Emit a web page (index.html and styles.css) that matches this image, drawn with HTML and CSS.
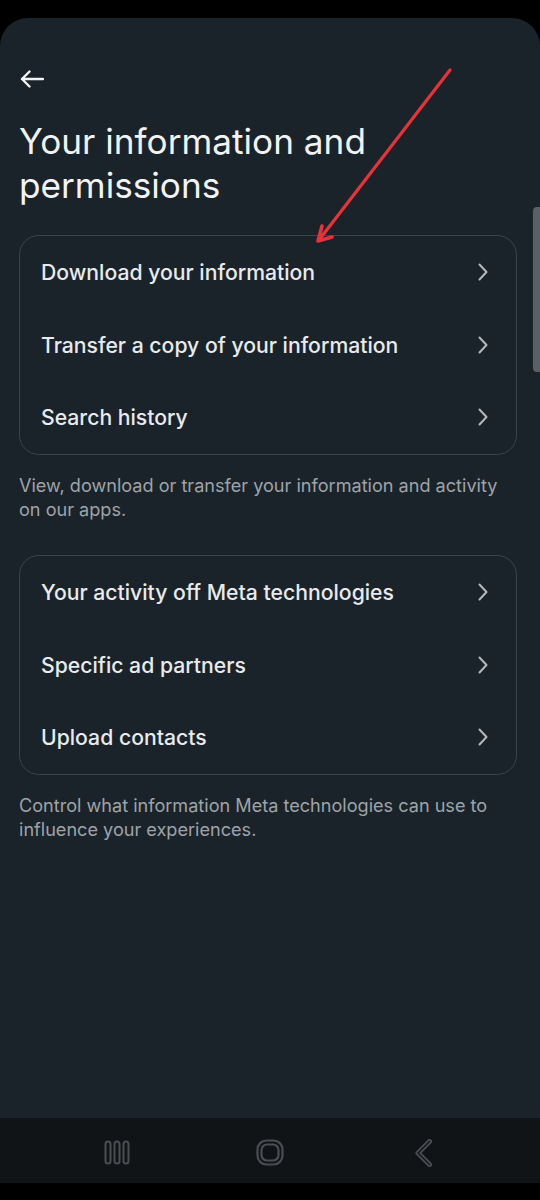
FILE: index.html
```html
<!DOCTYPE html>
<html lang="en">
<head>
<meta charset="utf-8">
<title>Your information and permissions</title>
<link rel="stylesheet" href="styles.css">
</head>
<body>
<div class="screen">
  <div class="statusbar"></div>
  <main class="panel">
    <div class="topbar">
      <svg class="back" viewBox="0 0 24 18" width="24" height="18" aria-hidden="true">
        <path d="M23 9H2M9.5 1.5L2 9l7.5 7.5" fill="none" stroke="#f2f3f5" stroke-width="2.4" stroke-linecap="round" stroke-linejoin="round"/>
      </svg>
    </div>
    <h1 class="title">Your information and permissions</h1>

    <section class="card">
      <div class="row"><span>Download your information</span><svg class="chev" viewBox="0 0 10 18" width="10" height="18"><path d="M1.5 1.5L8.5 9l-7 7.5" fill="none" stroke="#b3b8bc" stroke-width="2" stroke-linecap="round" stroke-linejoin="round"/></svg></div>
      <div class="row"><span>Transfer a copy of your information</span><svg class="chev" viewBox="0 0 10 18" width="10" height="18"><path d="M1.5 1.5L8.5 9l-7 7.5" fill="none" stroke="#b3b8bc" stroke-width="2" stroke-linecap="round" stroke-linejoin="round"/></svg></div>
      <div class="row"><span>Search history</span><svg class="chev" viewBox="0 0 10 18" width="10" height="18"><path d="M1.5 1.5L8.5 9l-7 7.5" fill="none" stroke="#b3b8bc" stroke-width="2" stroke-linecap="round" stroke-linejoin="round"/></svg></div>
    </section>
    <p class="caption">View, download or transfer your information and activity on our apps.</p>

    <section class="card card-second">
      <div class="row"><span>Your activity off Meta technologies</span><svg class="chev" viewBox="0 0 10 18" width="10" height="18"><path d="M1.5 1.5L8.5 9l-7 7.5" fill="none" stroke="#b3b8bc" stroke-width="2" stroke-linecap="round" stroke-linejoin="round"/></svg></div>
      <div class="row"><span>Specific ad partners</span><svg class="chev" viewBox="0 0 10 18" width="10" height="18"><path d="M1.5 1.5L8.5 9l-7 7.5" fill="none" stroke="#b3b8bc" stroke-width="2" stroke-linecap="round" stroke-linejoin="round"/></svg></div>
      <div class="row"><span>Upload contacts</span><svg class="chev" viewBox="0 0 10 18" width="10" height="18"><path d="M1.5 1.5L8.5 9l-7 7.5" fill="none" stroke="#b3b8bc" stroke-width="2" stroke-linecap="round" stroke-linejoin="round"/></svg></div>
    </section>
    <p class="caption">Control what information Meta technologies can use to influence your experiences.</p>

    <div class="scrollbar"></div>
  </main>
  <nav class="navbar">
    <svg class="nav-recent" viewBox="0 0 26 25" width="26" height="25" aria-hidden="true">
      <rect x="1.5" y="1.5" width="5" height="22" rx="2.5" fill="none" stroke="#4a4e53" stroke-width="2"/>
      <rect x="10.5" y="1.5" width="5" height="22" rx="2.5" fill="none" stroke="#4a4e53" stroke-width="2"/>
      <rect x="19.5" y="1.5" width="5" height="22" rx="2.5" fill="none" stroke="#4a4e53" stroke-width="2"/>
    </svg>
    <svg class="nav-home" viewBox="0 0 28 27" width="28" height="27" aria-hidden="true">
      <rect x="1.5" y="1.5" width="25" height="24" rx="9" fill="none" stroke="#4a4e53" stroke-width="2.2"/>
      <rect x="5.5" y="5.5" width="17" height="16" rx="5.5" fill="none" stroke="#4a4e53" stroke-width="2.2"/>
    </svg>
    <svg class="nav-back" viewBox="0 0 18 28" width="18" height="28" aria-hidden="true">
      <path d="M14.5 2.5L3 14l11.5 11.5" fill="none" stroke="#4a4e53" stroke-width="5" stroke-linecap="round" stroke-linejoin="round"/>
      <path d="M14.5 2.5L3 14l11.5 11.5" fill="none" stroke="#111417" stroke-width="1.4" stroke-linecap="round" stroke-linejoin="round"/>
    </svg>
  </nav>
  <div class="bottom"></div>

  <svg class="annotation" viewBox="0 0 540 1200" width="540" height="1200" aria-hidden="true">
    <path d="M450 70L319 240" fill="none" stroke="#e8323a" stroke-width="3.2" stroke-linecap="round"/>
    <path d="M322 226L318 241L332 237" fill="none" stroke="#e8323a" stroke-width="3.6" stroke-linecap="round" stroke-linejoin="round"/>
  </svg>
</div>
</body>
</html>
```

FILE: styles.css
```css
* { box-sizing: border-box; }

html, body {
  margin: 0;
  padding: 0;
  background: #000;
}

body {
  font-family: Inter, Roboto, "Noto Sans", "Liberation Sans", sans-serif;
  color: #eceef0;
}

.screen {
  position: relative;
  width: 540px;
  height: 1200px;
  overflow: hidden;
  display: flex;
  flex-direction: column;
}

.statusbar {
  height: 18px;
  flex: none;
  background: #000;
}

.panel {
  position: relative;
  flex: none;
  height: 1100px;
  background: #1b232a;
  border-radius: 28px 28px 0 0;
  padding: 52px 23px 0 19px;
}

.topbar {
  height: 18px;
  padding-left: 1px;
  display: flex;
  align-items: center;
}

.back { display: block; }

.title {
  margin: 31px 0 0 0;
  font-size: 35.2px;
  line-height: 44px;
  font-weight: 400;
  color: #f2f3f5;
  letter-spacing: 0;
  width: 400px;
}

.card {
  margin-top: 28px;
  border: 1.5px solid #3a444c;
  border-radius: 20px;
  display: flex;
  flex-direction: column;
}

.card-second { margin-top: 34px; }

.row {
  height: 72.6px;
  display: flex;
  align-items: center;
  justify-content: space-between;
  padding: 0 28px 0 21px;
  font-size: 21.2px;
  font-weight: 500;
  color: #e8eaed;
  letter-spacing: 0;
}

.chev { display: block; flex: none; }

.caption {
  margin: 18px 0 0 0;
  font-size: 18.1px;
  line-height: 24px;
  color: #9ea3a8;
  letter-spacing: 0;
}

.scrollbar {
  position: absolute;
  right: 0;
  top: 189px;
  width: 7px;
  height: 165px;
  background: #5a6066;
  border-radius: 4px 0 0 4px;
}

.navbar {
  flex: none;
  height: 65px;
  background: #111417;
  display: flex;
  align-items: center;
  padding: 0 0 0 104px;
}

.nav-recent { display: block; margin-top: 4px; }
.nav-home { display: block; margin-left: 126px; margin-top: 4px; }
.nav-back { display: block; margin-left: 131px; margin-top: 4px; }

.bottom {
  flex: 1;
  background: #000;
}

.annotation {
  position: absolute;
  left: 0;
  top: 0;
  pointer-events: none;
}
```
